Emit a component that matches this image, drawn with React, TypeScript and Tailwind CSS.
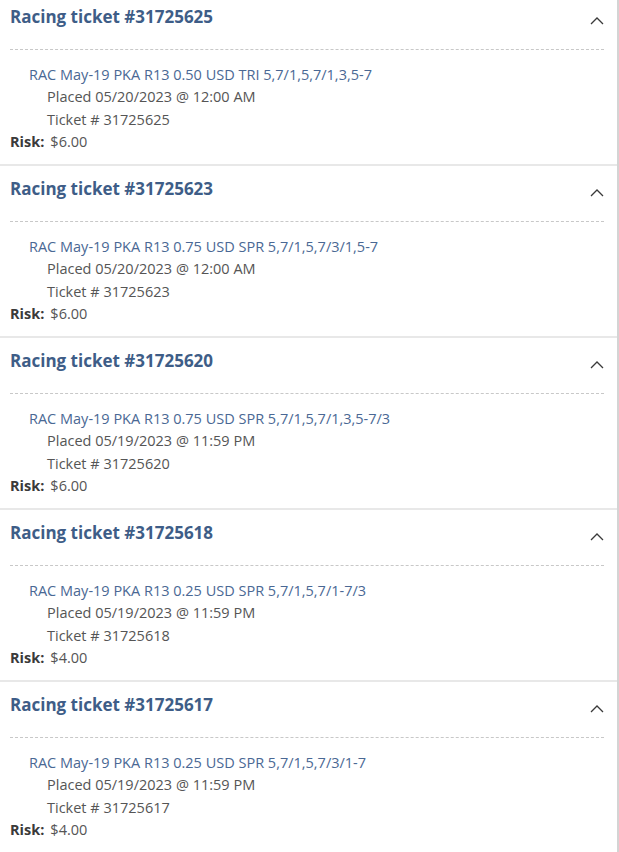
import React from "react";

type Ticket = {
  id: string;
  bet: string;
  placed: string;
  risk: string;
};

const tickets: Ticket[] = [
  { id: "31725625", bet: "RAC May-19 PKA R13 0.50 USD TRI 5,7/1,5,7/1,3,5-7", placed: "05/20/2023 @ 12:00 AM", risk: "$6.00" },
  { id: "31725623", bet: "RAC May-19 PKA R13 0.75 USD SPR 5,7/1,5,7/3/1,5-7", placed: "05/20/2023 @ 12:00 AM", risk: "$6.00" },
  { id: "31725620", bet: "RAC May-19 PKA R13 0.75 USD SPR 5,7/1,5,7/1,3,5-7/3", placed: "05/19/2023 @ 11:59 PM", risk: "$6.00" },
  { id: "31725618", bet: "RAC May-19 PKA R13 0.25 USD SPR 5,7/1,5,7/1-7/3", placed: "05/19/2023 @ 11:59 PM", risk: "$4.00" },
  { id: "31725617", bet: "RAC May-19 PKA R13 0.25 USD SPR 5,7/1,5,7/3/1-7", placed: "05/19/2023 @ 11:59 PM", risk: "$4.00" },
];

function ChevronUp() {
  return (
    <svg width="14" height="8" viewBox="0 0 14 8" fill="none" className="mt-[8px]">
      <polyline points="1,7 7,1 13,7" stroke="#3a3a3a" strokeWidth="1.3" />
    </svg>
  );
}

function TicketCard({ t }: { t: Ticket }) {
  return (
    <div className="border-b-2 border-[#e8e8e8] pl-[10px] pr-[13px] pt-[11px] pb-[10.7px]">
      <div className="flex h-[24px] items-center justify-between">
        <h3 className="text-[17px] font-bold leading-[24px] text-[#3e5d87]">
          Racing ticket #{t.id}
        </h3>
        <ChevronUp />
      </div>
      <div className="mt-[20px] border-t border-dashed border-[#c8c8c8]" />
      <div className="pt-[14px] text-[14.5px] leading-[22.33px]">
        <div className="pl-[19px] text-[#4a6894]">{t.bet}</div>
        <div className="pl-[37px] text-[#555555]">Placed {t.placed}</div>
        <div className="pl-[37px] text-[#555555]">Ticket # {t.id}</div>
        <div className="text-[#555555]">
          <span className="font-bold text-[#3a3a3a]">Risk:</span>
          <span className="ml-[6px]">{t.risk}</span>
        </div>
      </div>
    </div>
  );
}

export default function App() {
  return (
    <div
      className="h-[852px] w-[619px] overflow-hidden bg-white"
      style={{ fontFamily: '"Open Sans", "Noto Sans", sans-serif' }}
    >
      <div className="-mt-[6px] w-[619px] border-r-2 border-[#d4d4d4]">
        {tickets.map((t) => (
          <TicketCard key={t.id} t={t} />
        ))}
      </div>
    </div>
  );
}
